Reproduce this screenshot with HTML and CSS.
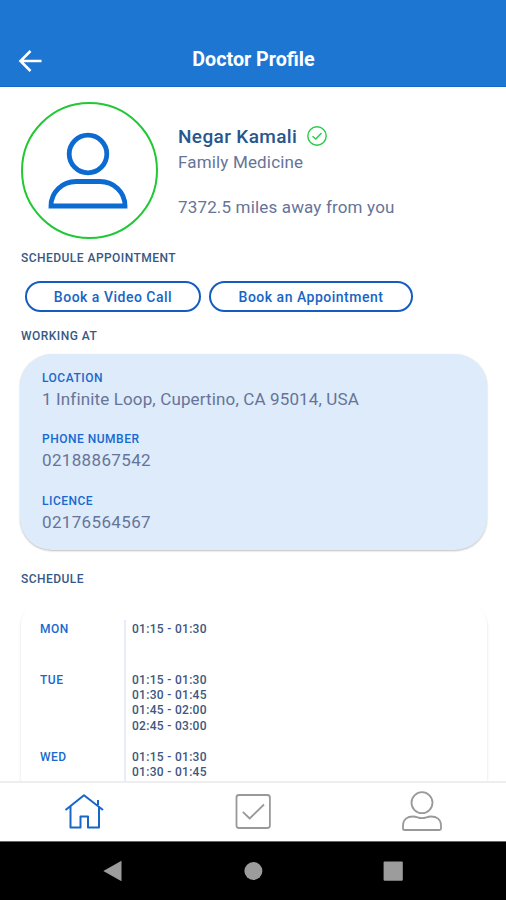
FILE: index.html
```html
<!DOCTYPE html>
<html lang="en">
<head>
<meta charset="utf-8">
<title>Doctor Profile</title>
<link rel="stylesheet" href="styles.css">
</head>
<body>
<div class="app">
  <header class="topbar">
    <svg class="back" viewBox="0 0 24 24" width="24" height="24"><path d="M23.500 12H3M12.500 2 2.500 12l10 10"/></svg>
    <h1>Doctor Profile</h1>
  </header>

  <main class="content">
    <section class="profile">
      <div class="avatar">
        <svg viewBox="0 0 80 78" width="80" height="78"><circle cx="40" cy="23" r="18.800"/><path d="M3 75C3 61 14.500 50.500 28 50.500H52C65.500 50.500 77 61 77 75Z"/></svg>
      </div>
      <div class="info">
        <div class="name-row"><span class="name">Negar Kamali</span>
          <svg class="verified" viewBox="0 0 20 20" width="20" height="20"><circle cx="10" cy="10" r="9.200"/><path d="M5.500 10.300 8.800 13 14.500 7"/></svg>
        </div>
        <div class="specialty">Family Medicine</div>
        <div class="distance">7372.5 miles away from you</div>
      </div>
    </section>

    <h2 class="h-appointment">SCHEDULE APPOINTMENT</h2>
    <div class="actions">
      <button class="video">Book a Video Call</button>
      <button class="visit">Book an Appointment</button>
    </div>

    <h2 class="h-working">WORKING AT</h2>
    <section class="work-card">
      <div class="field"><h3>LOCATION</h3><p>1 Infinite Loop, Cupertino, CA 95014, USA</p></div>
      <div class="field"><h3>PHONE NUMBER</h3><p class="number">02188867542</p></div>
      <div class="field"><h3>LICENCE</h3><p class="number">02176564567</p></div>
    </section>

    <h2 class="h-schedule">SCHEDULE</h2>
    <section class="schedule">
      <div class="day mon"><h3>MON</h3><div class="times"><span>01:15 - 01:30</span></div></div>
      <div class="day tue"><h3>TUE</h3><div class="times"><span>01:15 - 01:30</span><span>01:30 - 01:45</span><span>01:45 - 02:00</span><span>02:45 - 03:00</span></div></div>
      <div class="day wed"><h3>WED</h3><div class="times"><span>01:15 - 01:30</span><span>01:30 - 01:45</span></div></div>
    </section>
  </main>

  <nav class="tabs">
    <svg class="home" viewBox="0 0 40 40" width="40" height="40"><path d="M1.500 19 20 4.200 39 19M6.500 15.500V36.500H16.500V25.500H24V36.500H35V15.500M34 14V9"/></svg>
    <svg viewBox="0 0 40 40" width="40" height="40"><rect x="3.500" y="4" width="33.400" height="33" rx="2.500"/><path d="M9.800 20.800 16.700 27.500 31 13.500"/></svg>
    <svg viewBox="0 0 40 40" width="40" height="40"><circle cx="20" cy="11.700" r="10.500"/><path d="M1 37.500V34.500C1 28.500 5.500 25.500 11 25.500C15 25.500 16 27.200 20 27.200S25 25.500 29 25.500C34.500 25.500 39 28.500 39 34.500V37.500Q39 39 37.500 39H2.500Q1 39 1 37.500Z"/></svg>
  </nav>
  <div class="system">
    <svg viewBox="0 0 20 22" width="20" height="22"><path d="M.3 11 18.500 .7V21.300Z"/></svg>
    <svg viewBox="0 0 20 22" width="20" height="22"><circle cx="10.400" cy="11" r="9"/></svg>
    <svg viewBox="0 0 20 22" width="20" height="22"><rect x=".6" y="1.500" width="19.200" height="19.200" rx="1"/></svg>
  </div>
</div>
</body>
</html>
```
FILE: styles.css
```css
* { box-sizing: border-box; }
body, h1, h2, h3, p { margin: 0; }
body { font-family: Roboto, sans-serif; background: #fff; color: #365a8c; }
svg { display: block; fill: none; flex: none; }
.app { height: 900px; width: 506px; display: flex; flex-direction: column; overflow: hidden; }

.topbar { height: 87px; flex: none; display: grid; grid-template-columns: 60px 1fr 60px; padding-top: 33px; background: #1e76d3; border-bottom: 1px solid #1568c5; }
.back { margin: 16px 0 0 18px; stroke: #fff; stroke-width: 2.6; }
h1 { font-size: 19.700px; font-weight: 700; line-height: 53px; color: #fff; text-align: center; padding-left: 1px; }

.content { flex: 1; min-height: 0; overflow: hidden; padding: 15px 19px 0 20px; }
.profile { display: flex; height: 138px; }
.avatar { width: 137px; height: 137px; flex: none; margin-left: 1px; border: 2px solid #20c934; border-radius: 50%; padding: 27px 0 0 25px; }
.avatar svg { stroke: #0c6bd0; stroke-width: 4.8; }
.info { padding: 22px 0 0 20px; white-space: nowrap; }
.name-row { display: flex; align-items: center; height: 24px; }
.name { font-size: 19px; font-weight: 500; letter-spacing: .37px; color: #28568d; }
.verified { margin-left: 10px; stroke: #28cc46; stroke-width: 1.4; }
.specialty, .distance { font-size: 17px; line-height: 24px; letter-spacing: .16px; color: #667499; }
.specialty { margin-top: 2px; }
.distance { margin-top: 21px; }

h2 { font-size: 12px; font-weight: 500; line-height: 16px; letter-spacing: .46px; padding-left: 1px; color: #365886; }
.h-appointment { margin-top: 10px; }
.actions { display: flex; gap: 8px; padding-left: 5px; margin-top: 15px; }
button { height: 31px; padding: 1px 0 0; border: 2px solid #155cc0; border-radius: 16px; background: #fff; font: 500 14px/27px Roboto, sans-serif; letter-spacing: .5px; color: #1765c6; white-space: nowrap; }
.video { width: 176px; }
.visit { width: 204px; }
.h-working { margin-top: 16px; }

.work-card { height: 196px; margin-top: 10px; padding: 16px 22px; border-radius: 32px; background: #deebfa; box-shadow: 0 1px 2px rgba(0,0,0,.25); }
.field { height: 61.400px; }
h3 { font-size: 12px; font-weight: 500; line-height: 16px; letter-spacing: .5px; color: #1769d0; }
p { font-size: 17px; line-height: 24px; letter-spacing: .14px; margin-top: 1px; color: #667499; white-space: nowrap; }
p.number { letter-spacing: .35px; }

.h-schedule { margin-top: 21px; }
.schedule { height: 260px; margin: 16px 0 0 1px; padding: 17px 19px; border-radius: 22px; box-shadow: 0 2px 3px rgba(0,0,0,.13); }
.day { display: grid; grid-template-columns: 84px 1fr; }
.day h3 { line-height: 19px; }
.times { border-left: 2px solid #e3edfc; padding-left: 6px; font-size: 12px; font-weight: 500; line-height: 15.200px; letter-spacing: .3px; padding-top: 2px; color: #3d5780; }
.times span { display: block; }
.mon { height: 51px; }
.tue { height: 77px; }
.wed { height: 80px; }

.tabs { height: 60px; flex: none; display: grid; grid-template-columns: repeat(3, 1fr); justify-items: center; padding-top: 8px; background: #fff; border-top: 2px solid #eee; }
.tabs svg { stroke: #999; stroke-width: 1.8; stroke-linejoin: round; }
.tabs .home { stroke: #1766c8; stroke-width: 2; }
.system { height: 59px; flex: none; display: flex; justify-content: center; gap: 120px; padding-top: 18px; background: #000; border-top: 1px solid #666; }
.system svg { fill: #9c9c9c; }
```
